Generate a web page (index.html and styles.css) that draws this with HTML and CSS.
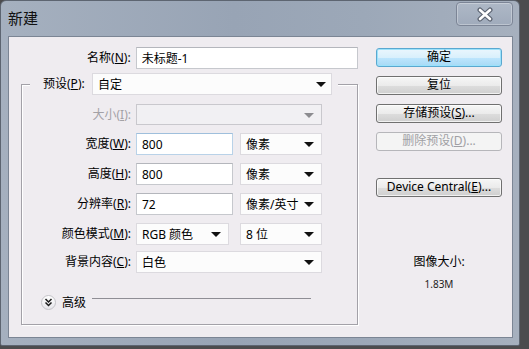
FILE: index.html
```html
<!DOCTYPE html>
<html lang="zh-CN">
<head>
  <meta charset="UTF-8" />
  <title>新建</title>
  <link rel="stylesheet" href="styles.css">
</head>
<body>

<div class="window">
  <div class="titlebar">
    <span class="title">新建</span>
    <div class="close">
      <svg width="18" height="15" viewBox="0 0 18 15">
        <path d="M4 3 L14 12 M14 3 L4 12" stroke="#5c6472" stroke-width="5" stroke-linecap="round" fill="none"/>
        <path d="M4 3 L14 12 M14 3 L4 12" stroke="#ffffff" stroke-width="2.6" stroke-linecap="round" fill="none"/>
      </svg>
    </div>
  </div>

  <div class="client">
    <div class="main">
      <div class="name-row">
        <span class="lbl lbl-name">名称(<u>N</u>):</span>
        <div class="input input-name">未标题-1</div>
      </div>

      <fieldset class="preset">
        <legend>
          <span class="lbl lbl-preset">预设(<u>P</u>):</span>
          <div class="select select-preset">自定<span class="arrow"></span></div>
        </legend>

        <div class="row row-size">
          <span class="lbl disabled">大小(<u>I</u>):</span>
          <div class="select select-full is-disabled"><span class="arrow"></span></div>
        </div>
        <div class="row">
          <span class="lbl">宽度(<u>W</u>):</span>
          <div class="input input-num input-focus">800</div>
          <div class="select select-unit">像素<span class="arrow"></span></div>
        </div>
        <div class="row">
          <span class="lbl">高度(<u>H</u>):</span>
          <div class="input input-num">800</div>
          <div class="select select-unit">像素<span class="arrow"></span></div>
        </div>
        <div class="row">
          <span class="lbl">分辨率(<u>R</u>):</span>
          <div class="input input-num">72</div>
          <div class="select select-unit">像素/英寸<span class="arrow"></span></div>
        </div>
        <div class="row">
          <span class="lbl">颜色模式(<u>M</u>):</span>
          <div class="select select-mode">RGB 颜色<span class="arrow"></span></div>
          <div class="select select-bits">8 位<span class="arrow"></span></div>
        </div>
        <div class="row row-bg">
          <span class="lbl">背景内容(<u>C</u>):</span>
          <div class="select select-full">白色<span class="arrow"></span></div>
        </div>

        <div class="advanced">
          <span class="expand">
            <svg width="9" height="9" viewBox="0 0 9 9">
              <path d="M1.5 1 L4.5 4 L7.5 1 M1.5 4.5 L4.5 7.5 L7.5 4.5" stroke="#1a1a1a" stroke-width="1.5" fill="none"/>
            </svg>
          </span>
          <span class="adv-text">高级</span>
          <span class="adv-line"></span>
        </div>
      </fieldset>
    </div>

    <div class="side">
      <div class="btn btn-default">确定</div>
      <div class="btn">复位</div>
      <div class="btn">存储预设(<u>S</u>)...</div>
      <div class="btn btn-disabled">删除预设(<u>D</u>)...</div>
      <div class="btn btn-device">Device Central(<u>E</u>)...</div>

      <div class="size-info">
        <div class="size-label">图像大小:</div>
        <div class="size-value">1.83M</div>
      </div>
    </div>
  </div>
</div>

</body>
</html>
```

FILE: styles.css
```css
body {
  margin: 0;
  background-color: #4c4c4e;
  font-family: "Noto Sans", "Noto Sans CJK SC", sans-serif;
  font-size: 12px;
  color: #000;
}
.window {
  width: 520px;
  height: 346px;
  box-sizing: border-box;
  padding: 0 6px 7px 7px;
  border: 1px solid #5d6571;
  border-radius: 6px 6px 2px 2px;
  background: linear-gradient(90deg, #a5b0bf 0%, #98a4b5 45%, #9ca8b8 70%, #a6b0be 100%);
  display: flex;
  flex-direction: column;
}
.titlebar {
  height: 35px;
  display: flex;
  align-items: flex-start;
}
.title {
  font-family: "Noto Sans CJK SC", sans-serif;
  font-size: 15px;
  line-height: 18px;
  margin-top: 8px;
  color: #111;
}
.close {
  margin-left: auto;
  margin-top: 1px;
  width: 57px;
  height: 24px;
  box-sizing: border-box;
  border: 1px solid #7c8596;
  border-radius: 4px;
  background: linear-gradient(#aeb8c6, #a0abbb);
  box-shadow: inset 0 0 0 1px rgba(255,255,255,0.3);
  display: flex;
  align-items: center;
  justify-content: center;
}
.client {
  flex: 1;
  display: flex;
  background-color: #efecf0;
  border: 1px solid #7b8594;
}
u {
  text-decoration: underline;
  text-underline-offset: 1px;
}

/* left column */
.main {
  width: 349px;
  padding: 10px 0 0 12px;
  box-sizing: border-box;
}
.lbl {
  text-align: right;
  white-space: nowrap;
  line-height: 16px;
}
.lbl.disabled {
  color: #a3a1a6;
}
.name-row {
  display: flex;
  align-items: center;
  height: 22px;
}
.lbl-name {
  width: 110px;
  margin-right: 5px;
}
.input,
.select {
  height: 22px;
  box-sizing: border-box;
  display: flex;
  align-items: center;
  padding-left: 5px;
  white-space: nowrap;
}
.input {
  background-color: #fff;
  border: 1px solid #c6c8cd;
  border-top-color: #b4b6bc;
}
.input-focus {
  border-color: #b9d2e8;
  border-top-color: #9fbfdc;
}
.input-name {
  width: 223px;
}
.input-num {
  width: 97px;
}
.select {
  position: relative;
  background-color: #fcfcfc;
  border: 1px solid #dcdadf;
}
.arrow {
  position: absolute;
  right: 7px;
  top: 8px;
  width: 0;
  height: 0;
  border-left: 5px solid transparent;
  border-right: 5px solid transparent;
  border-top: 5px solid #111;
}
.select.is-disabled {
  background-color: #f1f0f3;
  border-color: #c9c8cd;
}
.select.is-disabled .arrow {
  border-top-color: #8c8c90;
}

.preset {
  width: 337px;
  box-sizing: border-box;
  margin: 4px 0 0 0;
  padding: 0 0 14px 0;
  min-width: 0;
  border: 1px solid #a3a1a8;
  box-shadow: 1px 1px 0 #fff, inset 1px 1px 0 #fff;
}
.preset legend {
  margin-left: 8px;
  padding: 0 6px 0 13px;
  display: flex;
  align-items: center;
  background-color: #efecf0;
}
.lbl-preset {
  width: 46px;
  margin-right: 3px;
  text-align: left;
}
.select-preset {
  width: 240px;
}
.select-preset .arrow {
  right: 5px;
}
.row {
  display: flex;
  align-items: center;
  height: 22px;
  margin-top: 8px;
}
.row .lbl {
  width: 109px;
  margin-right: 5px;
}
.row-size {
  margin-top: 9px;
  height: 21px;
}
.row-size .select {
  height: 21px;
}
.row-bg {
  margin-top: 6px;
}
.select-full {
  width: 186px;
}
.select-unit {
  width: 82px;
  margin-left: 7px;
}
.select-mode {
  width: 93px;
}
.select-bits {
  width: 82px;
  margin-left: 11px;
}
.advanced {
  display: flex;
  align-items: center;
  height: 16px;
  margin-top: 21px;
}
.expand {
  margin-left: 19px;
  width: 15px;
  height: 15px;
  box-sizing: border-box;
  border-radius: 50%;
  border: 1px solid #c4c3c8;
  background: linear-gradient(#ffffff, #e6e5ea);
  display: flex;
  align-items: center;
  justify-content: center;
}
.adv-text {
  margin-left: 6px;
  font-size: 12px;
}
.adv-line {
  align-self: flex-start;
  margin-top: 4px;
  margin-left: 6px;
  width: 219px;
  height: 1px;
  background-color: #8f8e95;
}

/* right column */
.side {
  margin-left: 18px;
  padding-top: 11px;
  width: 126px;
}
.btn {
  height: 19px;
  box-sizing: border-box;
  margin-bottom: 9px;
  border: 1px solid #707070;
  border-radius: 3px;
  background: linear-gradient(#f6f6f6 0%, #ebebeb 50%, #dddddd 51%, #cfcfcf 100%);
  box-shadow: inset 0 0 0 1px rgba(255,255,255,0.7);
  text-align: center;
  line-height: 16px;
  font-size: 12px;
}
.btn-default {
  border-color: #5aa8d0;
  background: linear-gradient(#eaf6fd 0%, #d9f0fc 50%, #bee6fd 51%, #a7d9f5 100%);
  box-shadow: inset 0 0 0 1px #9ce2fb;
}
.btn-disabled {
  border-color: #b6b6ba;
  background: #f4f4f4;
  color: #a0a0a4;
  box-shadow: none;
}
.btn-device {
  margin-top: 27px;
}
.size-info {
  margin-top: 57px;
  text-align: center;
}
.size-label {
  line-height: 16px;
}
.size-value {
  margin-top: 8px;
  font-size: 10px;
  line-height: 12px;
  color: #222;
}
```
